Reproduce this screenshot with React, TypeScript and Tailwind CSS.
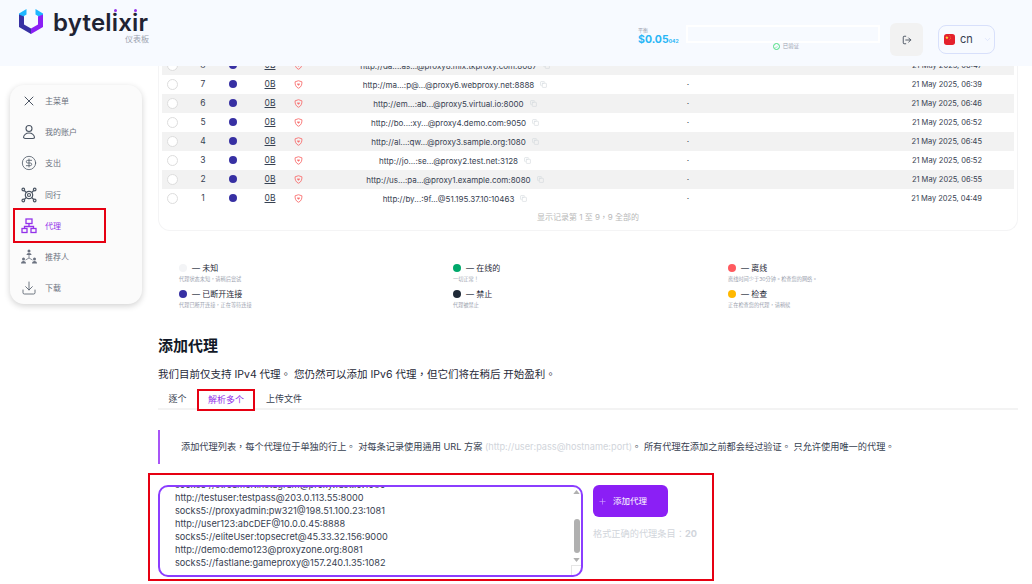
import { useEffect, useRef } from "react";
import { ChevronDown, CircleDollarSign, Copy, Download, LogOut, Plus, X } from "lucide-react";

const rows = [
    { id: 8, url: "http://da...:as...@proxy8.mix.tkproxy.com:8087", date: "21 May 2025, 06:47" },
    { id: 7, url: "http://ma...:p@...@proxy6.webproxy.net:8888", date: "21 May 2025, 06:39" },
    { id: 6, url: "http://em...:ab...@proxy5.virtual.io:8000", date: "21 May 2025, 06:46" },
    { id: 5, url: "http://bo...:xy...@proxy4.demo.com:9050", date: "21 May 2025, 06:52" },
    { id: 4, url: "http://al...:qw...@proxy3.sample.org:1080", date: "21 May 2025, 06:45" },
    { id: 3, url: "http://jo...:se...@proxy2.test.net:3128", date: "21 May 2025, 06:52" },
    { id: 2, url: "http://us...:pa...@proxy1.example.com:8080", date: "21 May 2025, 06:55" },
    { id: 1, url: "http://by...:9f...@51.195.37.10:10463", date: "21 May 2025, 04:49" }
];

const legend = [
    { color: "bg-[#f3f4f6]", title: "未知", sub: "代理状态未知，请稍后尝试" },
    { color: "bg-[#00a86b]", title: "在线的", sub: "一切正常！" },
    { color: "bg-[#ff5a5f]", title: "离线", sub: "离线时间少于30分钟。检查您的网络。" },
    { color: "bg-[#3730a3]", title: "已断开连接", sub: "代理已断开连接，正在等待连接" },
    { color: "bg-[#1f2937]", title: "禁止", sub: "代理被禁止" },
    { color: "bg-[#ffb800]", title: "检查", sub: "正在检查您的代理，请稍候" }
];

const proxyList = [
    "http://alpha:one1@192.0.2.10:8080",
    "socks5://bravo:two2@192.0.2.11:1080",
    "http://charlie:three3@192.0.2.12:3128",
    "socks5://delta:four4@192.0.2.13:1081",
    "http://echo:five5@192.0.2.14:8888",
    "socks5://foxtrot:six6@192.0.2.15:9050",
    "http://golf:seven7@192.0.2.16:8000",
    "socks5://streamer:instagram@proxy.fast.io:1080",
    "http://testuser:testpass@203.0.113.55:8000",
    "socks5://proxyadmin:pw321@198.51.100.23:1081",
    "http://user123:abcDEF@10.0.0.45:8888",
    "socks5://eliteUser:topsecret@45.33.32.156:9000",
    "http://demo:demo123@proxyzone.org:8081",
    "socks5://fastlane:gameproxy@157.240.1.35:1082"
].join("\n");

function Logo() {
    return (
        <svg viewBox="0 0 24 27" className="h-[27px] w-[24px]">
            <path d="M0 6.500 7.500 2v5.500L5 9v1L0 8z" fill="#1fb6ff" />
            <path d="M24 6.500 16.500 2v5.500L19 9v1l5-2z" fill="#1fb6ff" />
            <path d="M0 7.500 5 9.500v8l7 4V27L0 20z" fill="#3730a3" />
            <path d="M24 7.500 19 9.500v8l-7 4V27l12-7z" fill="#8b1ff5" />
        </svg>
    );
}

function Flag() {
    return (
        <svg viewBox="0 0 12 12" className="h-[11px] w-[11px]">
            <rect width="12" height="12" rx="3" fill="#e4202c" />
            <path d="m3.200 2 .5 1.300 1.300.1-1 .9.3 1.300-1.100-.7-1.100.7.3-1.300-1-.9 1.300-.1z" fill="#ffd43b" />
            <circle cx="6" cy="2" r=".4" fill="#ffd43b" />
            <circle cx="7" cy="3.200" r=".4" fill="#ffd43b" />
            <circle cx="7" cy="4.800" r=".4" fill="#ffd43b" />
            <circle cx="6" cy="6" r=".4" fill="#ffd43b" />
        </svg>
    );
}

function ShieldIcon() {
    return (
        <svg viewBox="0 0 10 10" fill="none" stroke="#f87171" strokeWidth="1" className="-ml-[1px] h-[9px] w-[9px]">
            <path d="M5 .8 8.800 2c.2 3.400-1 6-3.800 7.200C2.200 8 1 5.400 1.200 2z" />
            <path d="M5 6.300 3.600 4.900c-.6-.7.5-1.600 1.400-.7.900-.9 2-.0 1.400.7z" fill="#f87171" stroke="none" />
        </svg>
    );
}

function UserIcon() {
    return (
        <svg viewBox="0 0 16 16" fill="none" stroke="currentColor" strokeWidth="1.100" className="h-4 w-4">
            <circle cx="8" cy="4.500" r="3" />
            <path d="M2.500 13.500c0-2.500 2.500-4.500 5.500-4.500s5.500 2 5.500 4.500c0 .8-1 1-2 1h-7c-1 0-1.500-.3-2-1z" />
        </svg>
    );
}

function PeersIcon() {
    return (
        <svg viewBox="0 0 16 16" fill="none" stroke="currentColor" strokeWidth="1.200" className="h-4 w-4">
            <circle cx="8" cy="8" r="3.700" />
            <circle cx="8" cy="8" r="1.500" />
            <circle cx="2.300" cy="2.500" r="1.300" />
            <circle cx="13.700" cy="2.500" r="1.300" />
            <circle cx="2.300" cy="13.500" r="1.300" />
            <circle cx="13.700" cy="13.500" r="1.300" />
            <path d="m3.300 3.500 2 2M12.700 3.500l-2 2M3.300 12.500l2-2M12.700 12.500l-2-2" />
        </svg>
    );
}

function ProxyIcon() {
    return (
        <svg viewBox="0 0 16 16" fill="none" stroke="currentColor" strokeWidth="1.300" className="h-4 w-4">
            <rect x="5" y="1" width="6" height="4.500" />
            <rect x="1" y="10.500" width="5" height="4" />
            <rect x="10" y="10.500" width="5" height="4" />
            <path d="M8 5.500v3M3.500 10.500v-2h9v2" />
        </svg>
    );
}

function ReferralIcon() {
    return (
        <svg viewBox="0 0 18 16" fill="currentColor" className="h-4 w-[18px]">
            <circle cx="9" cy="2" r="1.500" />
            <path d="M6.500 6c0-1.200 1-2 2.500-2s2.500.8 2.500 2z" />
            <circle cx="3.500" cy="10" r="1.500" />
            <path d="M1 14.500c0-1.500 1-2.500 2.500-2.500S6 13 6 14.500z" />
            <circle cx="14.500" cy="10" r="1.500" />
            <path d="M12 14.500c0-1.500 1-2.500 2.500-2.500s2.500 1 2.500 2.500z" />
            <path d="M9 6v3M9 9 5.500 11M9 9l3.500 2" fill="none" stroke="currentColor" strokeWidth=".8" />
        </svg>
    );
}

function Sidebar() {
    const itemClass = "flex h-[31.3px] items-center gap-2 pl-[11px] text-[#6b7280]";
    const iconClass = "text-[#4b5563]";
    return (
        <aside className="w-[158px] shrink-0 pl-[10px] pt-[19px]">
            <nav className="w-[132px] rounded-[14px] bg-[#fbfbfb] text-[8px] shadow-[0_2px_6px_rgba(0,0,0,0.18)]">
                <div className={itemClass}>
                    <X size={16} strokeWidth={1.5} className={iconClass} />
                    <span>主菜单</span>
                </div>
                <div className={itemClass}>
                    <span className={iconClass}>
                        <UserIcon />
                    </span>
                    <span>我的账户</span>
                </div>
                <div className={itemClass}>
                    <CircleDollarSign size={16} strokeWidth={1.2} className={iconClass} />
                    <span>支出</span>
                </div>
                <div className={itemClass}>
                    <span className={iconClass}>
                        <PeersIcon />
                    </span>
                    <span>同行</span>
                </div>
                <div className="relative -my-[2px] ml-[3px] flex h-[35px] w-[93px] items-center gap-2 border-2 border-[#e60012] pl-[6px] text-[#9333ea]">
                    <ProxyIcon />
                    <span>代理</span>
                </div>
                <div className="flex h-[31.3px] items-center gap-[7px] pl-[10px] text-[#6b7280]">
                    <ReferralIcon />
                    <span>推荐人</span>
                </div>
                <div className={itemClass}>
                    <Download size={16} strokeWidth={1.2} className={iconClass} />
                    <span>下载</span>
                </div>
            </nav>
        </aside>
    );
}

function ProxyTable() {
    return (
        <section className="h-[175px] w-[860px] rounded-b-[12px] border border-t-0 border-[#f4f4f5] px-[3px]">
            <div className="-mt-[10px]">
                {rows.map((row) => (
                    <div
                        key={row.id}
                        className={`grid h-[19px] grid-cols-[20px_42px_18px_53px_10px_300px_166px_1fr] items-center text-[8.5px] text-[#374151] ${
                            row.id % 2 === 0 ? "bg-[#f2f2f2]" : "bg-white"
                        }`}
                    >
                        <span className="mb-[1px] ml-[5px] h-[11px] w-[11px] rounded-full border border-[#dddddd] bg-white" />
                        <span className="text-center">{row.id}</span>
                        <span className="mb-[1px] ml-[5px] h-2 w-2 rounded-full bg-[#3730a3]" />
                        <span className="pl-[3px] text-center underline">0B</span>
                        <ShieldIcon />
                        <span className="flex items-center justify-center gap-[6px] whitespace-nowrap text-[8px]">
                            {row.url}
                            <Copy size={7} className="text-[#d1d5db]" />
                        </span>
                        <span className="text-center">·</span>
                        <span className="whitespace-nowrap pr-[32px] text-right text-[7.5px]">{row.date}</span>
                    </div>
                ))}
                <p className="text-center text-[8px] leading-[18px] text-[#b8b8b8]">显示记录第 1 至 9，9 全部的</p>
            </div>
        </section>
    );
}

function Legend() {
    return (
        <section className="mt-[31px] grid grid-cols-[274px_275px_1fr] gap-y-[5px] pl-[21px]">
            {legend.map((item) => (
                <div key={item.title}>
                    <div className="flex h-[12px] items-center gap-[5px] text-[8px] text-[#1f2937]">
                        <span className={`h-2 w-2 rounded-full ${item.color}`} />
                        <span>— {item.title}</span>
                    </div>
                    <p className="mt-[1px] text-[5.2px] leading-[8px] text-[#9ca3af]">{item.sub}</p>
                </div>
            ))}
        </section>
    );
}

function ScrollOverlay() {
    return (
        <>
            <svg viewBox="0 0 8 5" className="absolute right-[3px] top-[5px] h-[4px] w-[7px] text-[#b0b0b0]">
                <path d="M4 0 8 5H0z" fill="currentColor" />
            </svg>
            <span className="absolute right-[3px] top-[34px] h-[34px] w-[6px] rounded-[3px] bg-[#b0b0b0]" />
            <svg viewBox="0 0 8 5" className="absolute bottom-[15px] right-[3px] h-[4px] w-[7px] text-[#b0b0b0]">
                <path d="M0 0h8L4 5z" fill="currentColor" />
            </svg>
            <span className="absolute bottom-[2px] right-[2px] h-[10px] w-[10px] border border-b-0 border-r-0 border-[#e5e5e5]" />
        </>
    );
}

function AddProxy() {
    const listRef = useRef<HTMLTextAreaElement>(null);

    useEffect(() => {
        if (listRef.current) listRef.current.scrollTop = listRef.current.scrollHeight;
    }, []);

    return (
        <section className="mt-[26px]">
            <h2 className="text-[15px] font-semibold leading-[22px] text-[#111827]">添加代理</h2>
            <p className="mt-[11px] text-[10.500px] leading-[14px] text-[#1f2937]">
                我们目前仅支持 IPv4 代理。 您仍然可以添加 IPv6 代理，但它们将在稍后 开始盈利。
            </p>
            <div className="mt-[8px] flex h-[20px] w-[860px] border-b-2 border-[#f3f3f3] text-[9px] text-[#374151]">
                <button className="w-[39px] text-center">逐个</button>
                <button className="relative -mt-[1px] h-[22px] w-[58px] border-2 border-[#e60012] bg-white text-[#9333ea]">解析多个</button>
                <button className="w-[58px] text-center">上传文件</button>
            </div>
            <div className="mt-[20px] flex h-[34px] items-center border-l-2 border-[#a855f7] pl-[21px] text-[9.2px] whitespace-nowrap text-[#374151]">
                <p>
                    添加代理列表，每个代理位于单独的行上。 对每条记录使用通用 URL 方案{" "}
                    <span className="text-[#d1d5db]">(http://user:pass@hostname:port)</span>。 所有代理在添加之前都会经过验证。 只允许使用唯一的代理。
                </p>
            </div>
            <div className="-ml-[10px] mt-[9px] flex h-[108px] w-[566px] gap-[10px] border-2 border-[#e60012] pl-[8px] pt-[10px]">
                <div className="relative h-[92px] w-[425px] shrink-0">
                    <textarea
                        ref={listRef}
                        readOnly
                        defaultValue={proxyList}
                        className="h-full w-full resize-none overflow-hidden rounded-[10px] border-2 border-[#8b3dff] px-[15px] pb-[6px] pt-[4px] text-[9.2px] leading-[13px] whitespace-pre text-[#374151] outline-none"
                    />
                    <ScrollOverlay />
                </div>
                <div>
                    <button className="flex h-[32px] w-[75px] items-center gap-[6px] rounded-[6px] bg-[#8b1ff5] pl-[5px] text-[8.5px] text-white">
                        <Plus size={9} strokeWidth={1.5} className="text-[#d8b4fe]" />
                        添加代理
                    </button>
                    <p className="mt-[11px] text-[9.2px] leading-[12px] text-[#d1d5db]">
                        格式正确的代理条目：<b>20</b>
                    </p>
                </div>
            </div>
        </section>
    );
}

export default function App() {
    return (
        <div lang="zh-Hant" className="flex h-[584px] w-[1032px] flex-col overflow-hidden bg-white font-[Inter,'Noto_Sans_CJK_TC',sans-serif]">
            <header className="z-10 flex h-[66px] shrink-0 items-start justify-between bg-[#f7faff] pl-[19px] pr-[37px]">
                <div className="flex gap-[10px] pt-[7px]">
                    <Logo />
                    <div className="w-[96px]">
                        <div className="mt-[4px] text-[24px] font-semibold leading-[23px] tracking-[0.2px] text-[#1f2333]">
                            byte
                            <span>l</span>
                            <span className="relative">
                                i<span className="absolute left-[2px] top-[1px] h-[3px] w-[3px] rounded-full bg-[#9333ea]" />
                            </span>
                            x
                            <span className="relative">
                                i<span className="absolute left-[2px] top-[1px] h-[3px] w-[3px] rounded-full bg-[#9333ea]" />
                            </span>
                            r
                        </div>
                        <p className="mt-[1px] text-right text-[8px] leading-[9px] text-[#9ca3af]">仪表板</p>
                    </div>
                </div>
                <div className="flex items-start">
                    <div className="w-[48px] pt-[27px]">
                        <p className="text-[5px] leading-[6px] text-[#9ca3af]">平衡</p>
                        <p className="text-[10.500px] font-bold leading-[13px] text-[#29b6f6]">
                            $0.05<span className="text-[5px]">042</span>
                        </p>
                    </div>
                    <div className="w-[194px] pt-[25px]">
                        <div className="h-[18px] border-2 border-white" />
                        <div className="flex items-center justify-center gap-[3px] pl-[6px] text-[5.500px] leading-[7px] text-[#9ca3af]">
                            <span className="flex h-[7px] w-[7px] items-center justify-center rounded-full border border-[#4ade80] text-[4px] text-[#4ade80]">✓</span>
                            已验证
                        </div>
                    </div>
                    <button className="ml-[10px] mt-[23px] flex h-[33px] w-[33px] items-center justify-center rounded-[6px] bg-[#f2f2f2] text-[#374151]">
                        <LogOut size={10} />
                    </button>
                    <div className="ml-[15px] mt-[25px] flex h-[29px] w-[57px] items-center gap-[5px] rounded-[8px] border border-[#d8e0fb] pl-[5px] text-[11px] text-[#374151]">
                        <Flag />
                        <span>cn</span>
                        <ChevronDown size={9} className="ml-[5px] text-[#d8e0fb]" />
                    </div>
                </div>
            </header>
            <div className="flex min-h-0 flex-1">
                <Sidebar />
                <main className="min-w-0 flex-1">
                    <ProxyTable />
                    <Legend />
                    <AddProxy />
                </main>
            </div>
        </div>
    );
}
